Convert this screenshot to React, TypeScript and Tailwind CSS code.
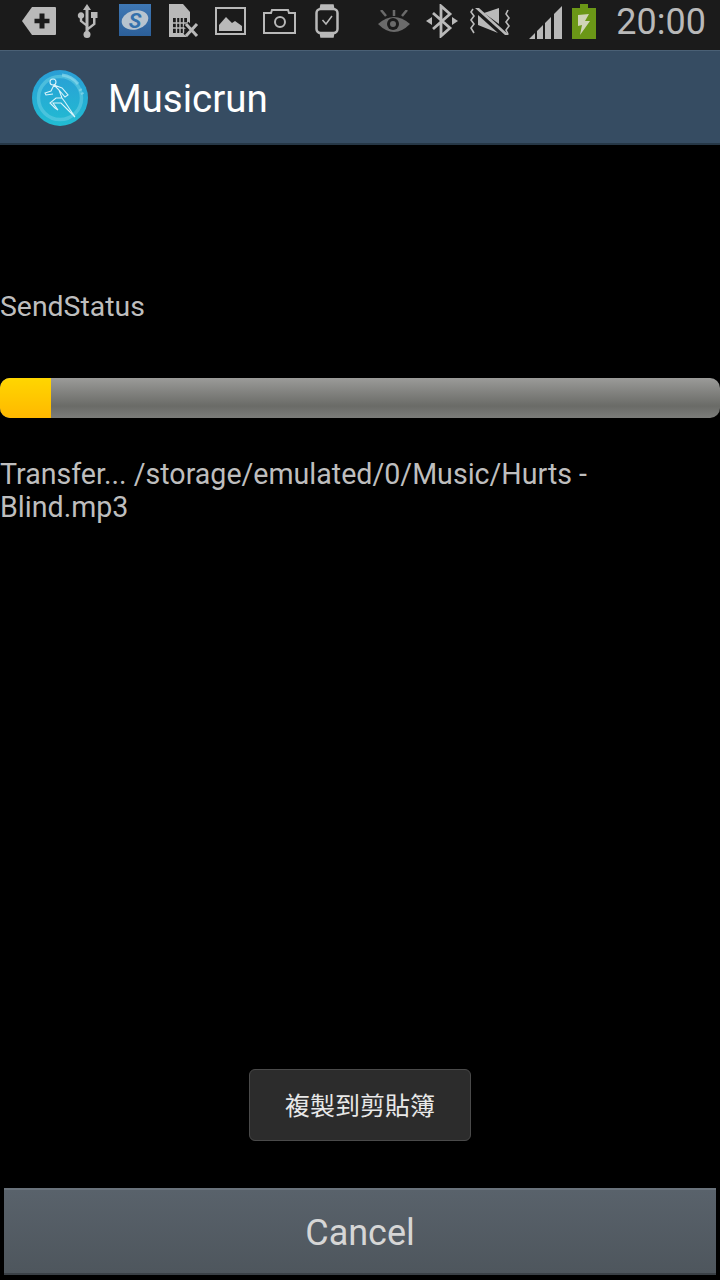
const G = "#b9b9b9";
const BG = "#1b1b1b";

function StatusIcons() {
  return (
    <>
      <svg width="34" height="28" viewBox="0 0 34 28" className="ml-[22px] mt-[7px]">
        <path d="M0 14 L10 0 H33 Q34 0 34 1 V27 Q34 28 33 28 H10 Z" fill={G} />
        <path d="M17.500 6.500 H22.500 V11.800 H27.500 V16.200 H22.500 V21.500 H17.500 V16.200 H12.500 V11.800 H17.500 Z" fill={BG} />
      </svg>
      <svg width="24" height="34" viewBox="0 0 24 34" className="ml-[19px] mt-[4px]">
        <path d="M12 0 L16 6 H13.500 V23 L18 19.500 V14 H16 V8 H22.500 V14 H20.500 V20.500 L13.500 26 V29 H10.500 V22 L4.800 17.500 V14.500 A3.200 3.200 0 1 1 7.200 14.500 V16.500 L10.500 19.200 V6 H8 Z" fill={G} />
        <circle cx="12" cy="30.500" r="3.500" fill={G} />
      </svg>
      <div className="ml-[20px] mt-[4px] flex h-[32px] w-[32px] items-center justify-center bg-gradient-to-b from-[#3f78b5] to-[#2c5f99]">
        <svg width="28" height="22" viewBox="0 0 28 22">
          <ellipse cx="14" cy="11" rx="13.500" ry="9.500" transform="rotate(-14 14 11)" fill="#b7c3cf" />
          <text x="14" y="18.500" textAnchor="middle" fontFamily="Roboto, sans-serif" fontWeight="700" fontStyle="italic" fontSize="21" fill="#3470ac">S</text>
        </svg>
      </div>
      <svg width="30" height="34" viewBox="0 0 30 34" className="ml-[18px] mt-[4px]">
        <path d="M0 0 H14 L21 8 V33 H0 Z" fill={G} />
        <rect x="4" y="14" width="14" height="15" fill={BG} />
        <path d="M7.500 14 V29 M11 14 V29 M14.500 14 V29 M4 19 H18 M4 24 H18" stroke={G} strokeWidth="1.400" />
        <path d="M17 20 L28 32 M28 20 L17 32" stroke={BG} strokeWidth="7" />
        <path d="M17 20 L28 32 M28 20 L17 32" stroke={G} strokeWidth="3" />
      </svg>
      <svg width="32" height="28" viewBox="0 0 32 28" className="ml-[16px] mt-[7px]">
        <rect x="1" y="1" width="29" height="26" fill="none" stroke={G} strokeWidth="2" />
        <path d="M4 24 V18 L11 10 L17 16 L20 14 L27 19 V24 Z" fill={G} />
      </svg>
      <svg width="34" height="25" viewBox="0 0 34 25" className="ml-[16px] mt-[9px]">
        <path d="M1 4 H8 L9 1 H25 L26 4 H32 V24 H1 Z" fill="none" stroke={G} strokeWidth="2" />
        <circle cx="17" cy="13" r="5" fill="none" stroke={G} strokeWidth="2" />
      </svg>
      <svg width="24" height="34" viewBox="0 0 24 34" className="ml-[18px] mt-[4px]">
        <path d="M5 6 L6 1 H18 L19 6 M5 28 L6 33 H18 L19 28" fill={G} stroke={G} strokeWidth="1.500" />
        <rect x="1.500" y="5" width="21" height="24" rx="4" fill={BG} stroke={G} strokeWidth="2.500" />
        <path d="M7.500 16 L11 20 L17 12" fill="none" stroke={G} strokeWidth="1.500" />
      </svg>

      <div className="flex-1" />

      <svg width="34" height="24" viewBox="0 0 34 24" className="mr-[15px] mt-[10px]">
        <path d="M1 14 Q17 0 33 14 Q17 30 1 14 Z" fill="#6b6b6b" />
        <circle cx="16" cy="14" r="6" fill={BG} />
        <circle cx="16" cy="14" r="3" fill="#6b6b6b" />
        <path d="M17 0 V6 M4 0 L9 6 M30 0 L25 6" stroke="#6b6b6b" strokeWidth="2.500" />
      </svg>
      <svg width="32" height="34" viewBox="0 0 32 34" className="mr-[12px] mt-[4px]">
        <path d="M7 9 L24 24 L15 32 V2 L24 10 L7 25" fill="none" stroke={G} strokeWidth="2.800" />
        <path d="M0 17 L6 13 V21 Z M32 17 L26 13 V21 Z" fill={G} />
      </svg>
      <svg width="42" height="28" viewBox="0 0 42 28" className="mr-[17px] mt-[8px]">
        <path d="M14 5 L29 0 V16 Z" fill={G} />
        <path d="M8 7 V17 L28 25 Z" fill={G} />
        <path d="M5 0 H9 L39 27 H35 Z" fill={G} />
        <path d="M3 1 L1 4 L4 8 L1 12 L4 16 L1 20 L4 25 M38 2 L36 6 L39 10 L36 14 L39 18 L36 22 L38 26" fill="none" stroke={G} strokeWidth="1.600" />
      </svg>
      <svg width="34" height="33" viewBox="0 0 34 33" className="mr-[9px] mt-[6px]">
        <path d="M0 33 L6 27 V33 Z M8 33 V25 L14 19 V33 Z M16 33 V17 L22 11 V33 Z M25 33 V8 L33 0 V33 Z" fill={G} />
      </svg>
      <svg width="24" height="35" viewBox="0 0 24 35" className="mr-[20px] mt-[4px]">
        <rect x="8" y="0" width="8" height="4" fill="#6b9717" />
        <rect x="0" y="4" width="24" height="31" fill="#6b9717" />
        <path d="M17 10 L6 11 L6 22 L10 21 L8 31 L18 17 L13 17 Z" fill="#d0d4b8" />
      </svg>
      <span className="mr-[14px] mt-px font-['Roboto',sans-serif] text-[36px] leading-[42px] text-[#b9b9b9]">20:00</span>
    </>
  );
}

function Logo() {
  return (
    <svg width="56" height="56" viewBox="0 0 56 56" className="mt-[2px]">
      <defs>
        <linearGradient id="lg" x1="0" y1="0" x2="0" y2="1">
          <stop offset="0" stopColor="#2a9ed6" />
          <stop offset="1" stopColor="#21bcd2" />
        </linearGradient>
      </defs>
      <circle cx="28" cy="28" r="28" fill="url(#lg)" />
      <circle cx="28" cy="28" r="21.500" fill="none" stroke="#5fcbe2" strokeWidth="3.500" opacity="0.65" />
      <path d="M30 5 A23 23 0 0 1 46 14" fill="none" stroke="#8ad8ec" strokeWidth="3" opacity="0.7" />
      <path d="M48 19 L51 25" stroke="#8ad8ec" strokeWidth="3" strokeDasharray="2 2" opacity="0.7" />
      <g fill="none" stroke="#d8f3fa" strokeWidth="1.100">
        <circle cx="21" cy="12" r="3" />
        <path d="M22 15 L30 18 L36 25 L33 27 L27 20 M22 15 L19 21 L13 23 L14 25 L21 24 M22 15 L27 20 L30 28 L33 32 L43 47 L40 44 L29 33 L21 33 L26 40 L23 38 L18 33 L24 28 L30 28" />
      </g>
    </svg>
  );
}

export default function App() {
  return (
    <div className="relative flex h-[1280px] w-[720px] flex-col overflow-hidden bg-black font-['Roboto',sans-serif]">
      <div className="flex h-[50px] shrink-0 items-start bg-[#1b1b1b]">
        <StatusIcons />
      </div>
      <div className="flex h-[95px] shrink-0 items-center border-t border-b-2 border-t-[#4a6075] border-b-[#263746] bg-[#364c62] pl-[32px]">
        <Logo />
        <span className="ml-[20px] pt-[3px] text-[38.500px] leading-[48px] text-white">Musicrun</span>
      </div>

      <div className="flex min-h-0 flex-1 flex-col">
        <p className="mt-[145px] text-[28.400px] leading-[34px] text-[#bebebe]">SendStatus</p>
        <div className="mt-[54px] h-[40px] w-full overflow-hidden rounded-[10px] bg-gradient-to-b from-[#9b9b99] via-[#6a6b67] via-70% to-[#7c7d7a]">
          <div className="h-full w-[51px] bg-gradient-to-b from-[#ffd600] to-[#ffb800]" />
        </div>
        <p className="mt-[40px] text-[28.600px] leading-[33px] text-[#bebebe]">
          Transfer... /storage/emulated/0/Music/Hurts -<br />Blind.mp3
        </p>
        <div className="flex-1" />
        <button className="mx-[4px] mb-[5px] h-[87px] border-t-2 border-b-2 border-t-[#69727b] border-b-[#3a4046] bg-gradient-to-b from-[#59626b] to-[#4e565d] pt-[3px] text-[36px] text-[#d6d6d6]">
          Cancel
        </button>
      </div>

      <div className="absolute left-[249px] top-[1069px] flex h-[72px] w-[222px] items-center justify-center rounded-[6px] border border-[#4a4a4a] bg-[#2c2c2c] font-['Noto_Sans_CJK_TC',sans-serif] text-[25px] text-[#e8e8e8]">
        複製到剪貼簿
      </div>
    </div>
  );
}
